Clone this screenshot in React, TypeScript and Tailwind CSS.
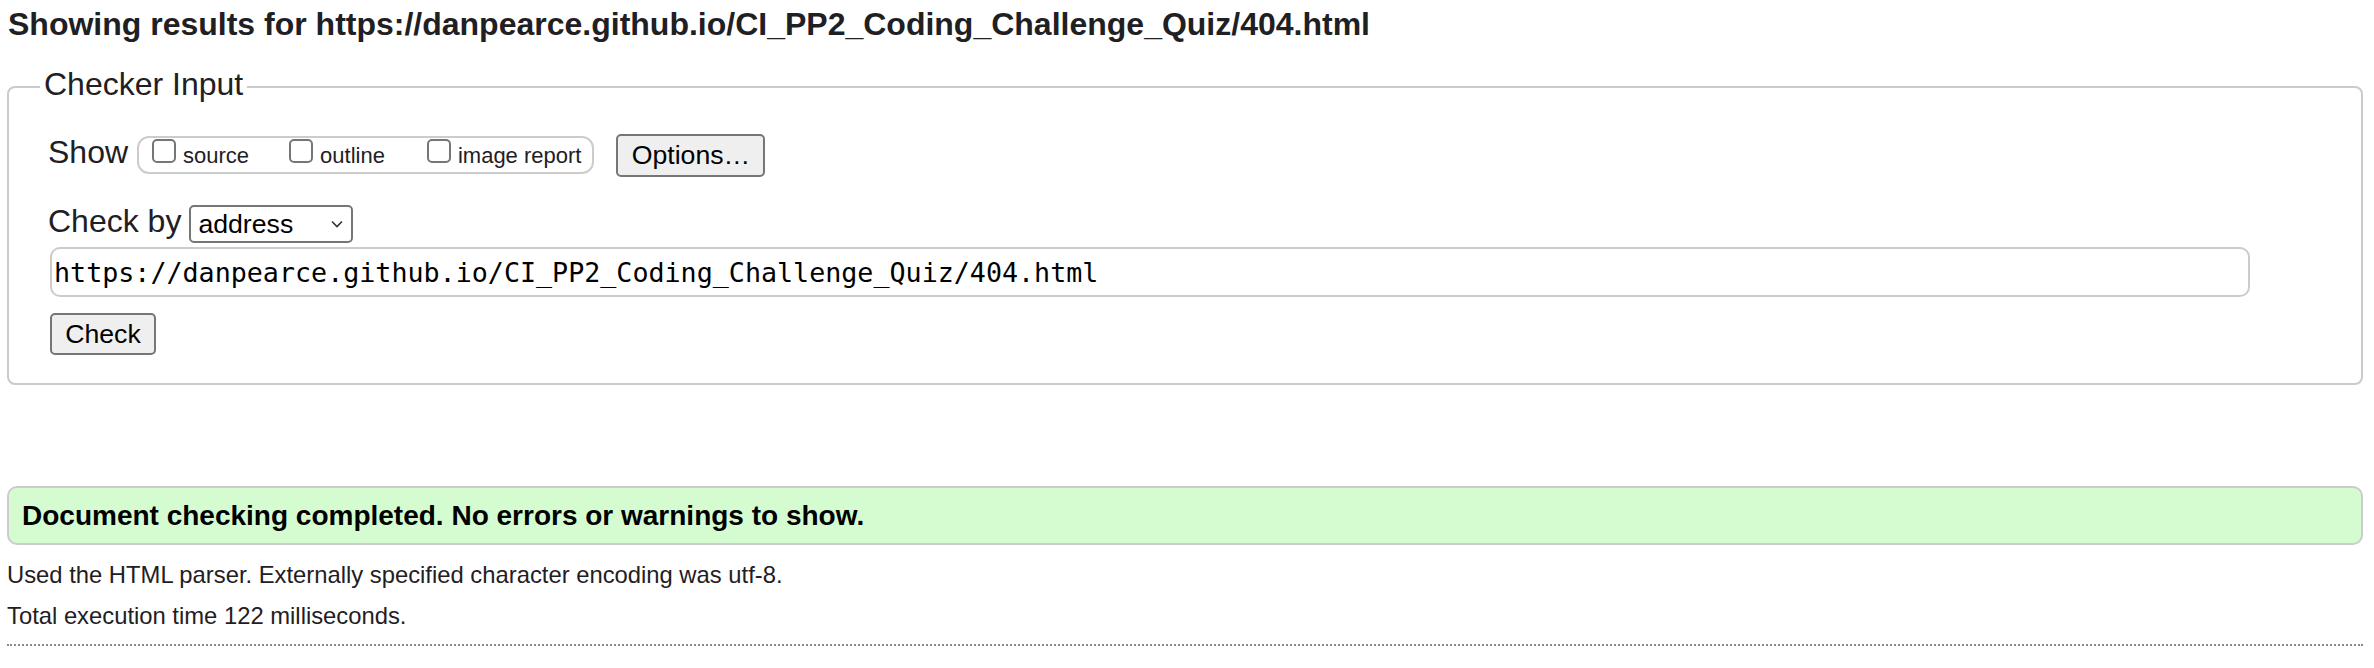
const URL = 'https://danpearce.github.io/CI_PP2_Coding_Challenge_Quiz/404.html';

function Checkbox({ label, className = '' }: { label: string; className?: string }) {
  return (
    <label className={`flex items-start ${className}`}>
      <span className="mt-[1px] size-[24px] shrink-0 rounded-[5px] border-2 border-[#767676] bg-white" />
      <span className="ml-[7px] text-[22px] leading-[36px] whitespace-nowrap">{label}</span>
    </label>
  );
}

function Button({ children, className = '' }: { children: React.ReactNode; className?: string }) {
  return (
    <button
      type="button"
      className={`flex items-center justify-center rounded-[5px] border-2 border-[#767676] bg-[#efefef] text-[26.67px] leading-[30px] text-black ${className}`}
    >
      {children}
    </button>
  );
}

export default function App() {
  return (
    <div className="h-[668px] w-[2374px] bg-white pl-[7px] pr-[11px] font-['Liberation_Sans',Arial,sans-serif] text-[#1f2023]">
      <h2 className="pl-[1px] pt-[6px] text-[32px] font-bold leading-[36px] whitespace-nowrap">
        Showing results for {URL}
      </h2>

      <fieldset className="mt-[27px] w-full rounded-[8px] border-2 border-[#cbcbcb] pl-[31px] pt-[29px] pb-[28px]">
        <legend className="px-[4px] pb-[6px] text-[32px] leading-[30px]">Checker Input</legend>

        <div className="pl-[8px]">
          <div className="flex h-[43px] items-start">
            <span className="text-[32px] leading-[36px]">Show</span>
            <div className="ml-[9px] mt-[2px] flex h-[38px] items-start rounded-[12px] border-2 border-[#cccccc] pl-[13px] pr-[11px]">
              <Checkbox label="source" />
              <Checkbox label="outline" className="ml-[40px]" />
              <Checkbox label="image report" className="ml-[42px]" />
            </div>
            <Button className="ml-[22px] h-[43px] w-[149px] pb-[2px]">Options…</Button>
          </div>

          <div className="mt-[26px] flex items-start">
            <span className="text-[32px] leading-[36px] whitespace-nowrap">Check by</span>
            <div className="ml-[8px] mt-[2px] flex h-[38px] w-[164px] items-center justify-between rounded-[5px] border-2 border-[#767676] bg-white pl-[7px] pr-[8px] text-[26.67px] leading-[30px] text-black">
              <span>address</span>
              <svg width="12" height="8" viewBox="0 0 12 8" fill="none">
                <path d="M1 1.5 6 6.5 11 1.5" stroke="#333" strokeWidth="1.6" />
              </svg>
            </div>
          </div>

          <div className="ml-[2px] mt-[4px] flex h-[50px] w-[2200px] items-center rounded-[10px] border-2 border-[#cccccc] bg-white pl-[2px] font-['DejaVu_Sans_Mono',monospace] text-[26.7px] leading-[31px] text-black">
            {URL}
          </div>

          <Button className="ml-[2px] mt-[16px] h-[42px] w-[106px]">Check</Button>
        </div>
      </fieldset>

      <div className="mt-[101px] flex h-[59px] w-full items-center rounded-[10px] border-2 border-[#cccccc] bg-[#d5fcd0] pl-[13px] text-[28px] font-bold leading-[32px] text-black">
        Document checking completed. No errors or warnings to show.
      </div>

      <p className="mt-[16px] text-[23.8px] leading-[28px]">
        Used the HTML parser. Externally specified character encoding was utf-8.
      </p>
      <p className="mt-[13px] text-[23.8px] leading-[28px]">Total execution time 122 milliseconds.</p>

      <div className="mt-[14px] w-full border-t-2 border-dotted border-[#8a8a8a]" />
    </div>
  );
}
